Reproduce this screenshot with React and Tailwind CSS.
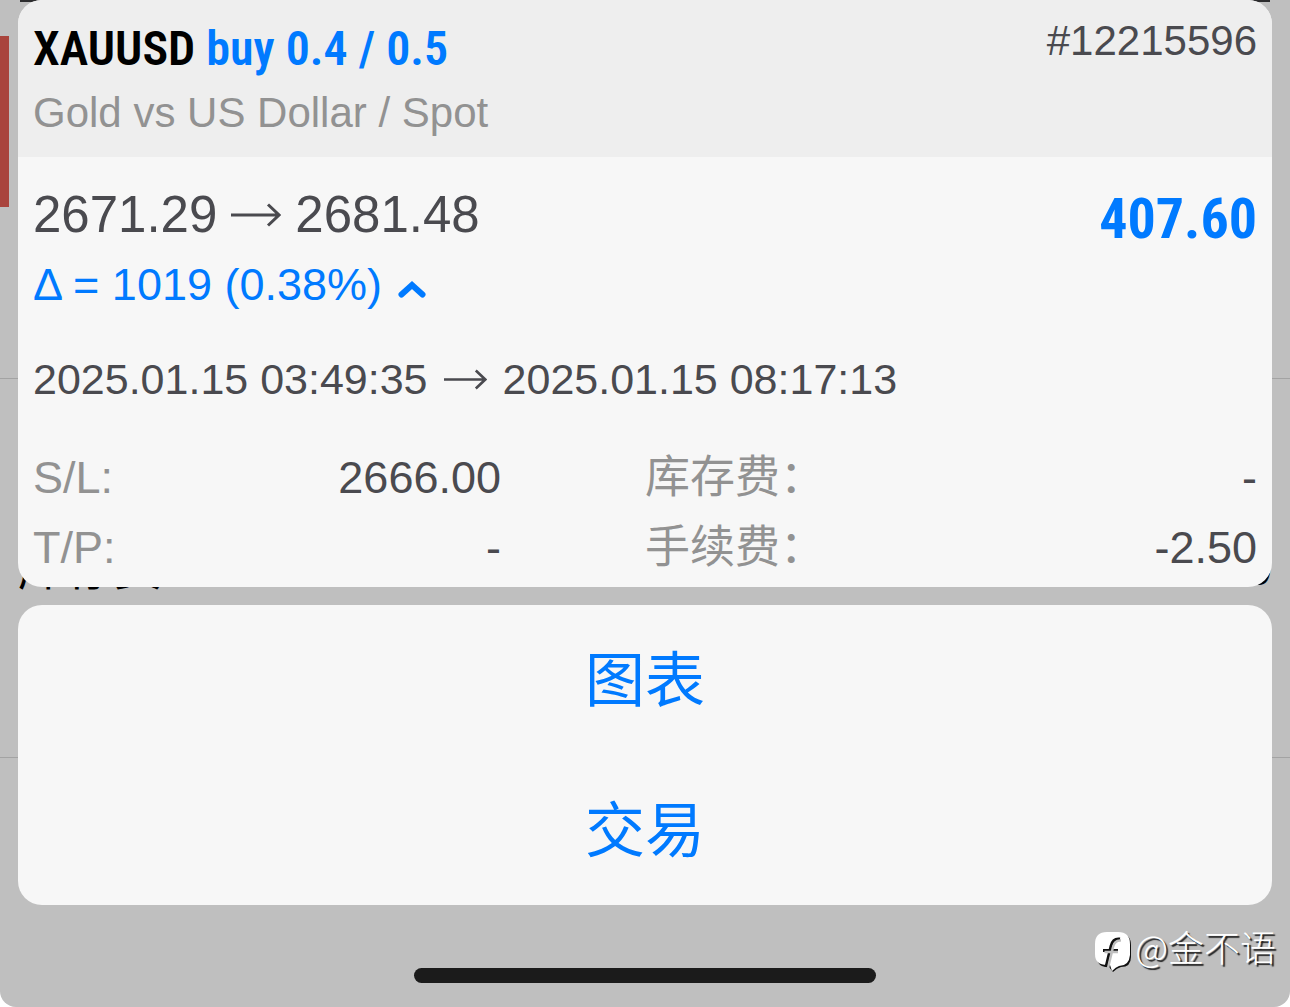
import clsx from 'clsx'

const ORDER = {
  symbol: 'XAUUSD',
  side: 'buy 0.4 / 0.5',
  description: 'Gold vs US Dollar / Spot',
  ticket: '#12215596',
  openPrice: '2671.29',
  closePrice: '2681.48',
  profit: '407.60',
  delta: 'Δ = 1019 (0.38%)',
  openTime: '2025.01.15 03:49:35',
  closeTime: '2025.01.15 08:17:13',
}

const DETAILS = [
  { label: 'S/L:', value: '2666.00' },
  { label: '库存费：', value: '-' },
  { label: 'T/P:', value: '-' },
  { label: '手续费：', value: '-2.50' },
]

const ACTIONS = ['图表', '交易']

const Arrow = ({ className }) => (
  <svg
    viewBox="0 0 50 24"
    className={clsx('flex-shrink-0', className)}
    fill="none"
    stroke="currentColor"
    strokeWidth="3"
    aria-hidden
  >
    <path d="M0 12H48M37 1.5L48 12L37 22.5" />
  </svg>
)

const Chevron = () => (
  <svg
    viewBox="0 0 28 20"
    className="w-7 h-5 mt-2 flex-shrink-0"
    fill="none"
    stroke="currentColor"
    strokeWidth="6"
    strokeLinecap="round"
    aria-hidden
  >
    <path d="M3.5 15.5L14 6L24.5 15.5" strokeLinejoin="miter" />
  </svg>
)

// the dimmed history list that shows around the sheet
const Backdrop = () => (
  <div className="absolute inset-0" aria-hidden>
    <div className="absolute left-0 top-9 w-[9px] h-[171px] bg-[#a9443d]" />
    <div className="absolute left-0 right-0 top-[378px] h-px bg-[#a3a3a3]" />
    <div className="absolute left-0 right-0 top-[757px] h-px bg-[#a3a3a3]" />
    <div className="absolute left-5 top-0 w-5 h-[2px] bg-[#2c2c2e]" />
    <div className="absolute right-5 top-0 w-5 h-[2px] bg-[#2c2c2e]" />
    <div className="absolute left-[18px] right-[18px] top-[539px] flex justify-between text-[48px] leading-[60px] text-black">
      <span>库存费</span>
      <span>0.00</span>
    </div>
  </div>
)

const OrderCard = () => (
  <section className="rounded-3xl overflow-hidden bg-[#f7f7f7] text-[#4a4a4f]">
    <header className="flex justify-between h-[157px] px-[15px] pt-5 bg-[#eeeeee]">
      <div>
        <h1 className="font-['Roboto_Condensed',sans-serif] font-semibold text-[48px] leading-[58px] text-black">
          {ORDER.symbol} <span className="text-[#007aff]">{ORDER.side}</span>
        </h1>
        <p className="mt-3 text-[42px] leading-[46px] text-[#929292]">{ORDER.description}</p>
      </div>
      <p className="text-[42px] leading-[42px]">{ORDER.ticket}</p>
    </header>

    <div className="px-[15px] pt-7 pb-1">
      <div className="flex justify-between">
        <p className="flex items-center gap-3.5 h-[60px] text-[51px] leading-[60px]">
          {ORDER.openPrice}
          <Arrow className="w-[50px] h-6" />
          {ORDER.closePrice}
        </p>
        <p className="pt-1 font-['Roboto_Condensed',sans-serif] font-bold text-[56px] leading-[60px] text-[#007aff]">
          {ORDER.profit}
        </p>
      </div>

      <button type="button" className="flex items-center gap-4 mt-2.5 text-[45px] leading-[52px] text-[#007aff]">
        {ORDER.delta}
        <Chevron />
      </button>

      <p className="flex items-center gap-4 mt-[42px] text-[43px] leading-[52px]">
        {ORDER.openTime}
        <Arrow className="w-[43px] h-[21px]" />
        {ORDER.closeTime}
      </p>

      <dl className="grid grid-cols-2 mt-[38px] text-[45px] leading-[70px]">
        {DETAILS.map(({ label, value }) => (
          <div key={label} className="flex justify-between odd:pr-36">
            <dt className="text-[#929292]">{label}</dt>
            <dd>{value}</dd>
          </div>
        ))}
      </dl>
    </div>
  </section>
)

const Actions = () => (
  <div className="flex flex-col rounded-3xl bg-[#f7f7f7]">
    {ACTIONS.map((label) => (
      <button key={label} type="button" className="h-[150px] pt-1 text-[60px] leading-[72px] text-[#007aff]">
        {label}
      </button>
    ))}
  </div>
)

const Watermark = () => (
  <div className="absolute right-[14px] top-[13px] flex items-end gap-0.5 text-[36px] leading-[56px] font-light text-white [text-shadow:2px_2px_1px_#222]">
    <svg viewBox="0 0 38 42" className="w-[38px] h-[42px]" fill="none" aria-hidden>
      <path
        d="M12 2H25Q36 2 36 13V25Q36 35 26 35Q22 36 18 40L14 35H12Q2 35 2 24V13Q2 2 12 2Z"
        fill="#111"
      />
      <path
        d="M12 0H23Q35 0 35 12V23Q34 34 24 34Q21 35 17 39L15 33H12Q0 33 0 22V12Q0 0 12 0Z"
        fill="#fff"
      />
      <path d="M25 7Q18 6 16 14L11 35M8 18.5H23" stroke="#111" strokeWidth="3" />
      <path d="M26 8.5Q19.5 8 18 15L13 36M9.5 20H23" stroke="#bfbfbf" strokeWidth="2.5" />
    </svg>
    <span className="font-['Noto_Sans_CJK_SC',sans-serif]">@金不语</span>
  </div>
)

const App = () => (
  <div className="bg-white">
    <main className="relative min-h-screen overflow-hidden rounded-b-2xl bg-[#bfbfbf] font-['Liberation_Sans','Noto_Sans_CJK_SC',sans-serif]">
      <Backdrop />
      <div className="relative flex flex-col gap-[18px] px-[18px]">
        <OrderCard />
        <Actions />
      </div>
      <footer className="relative pt-[63px] pb-6">
        <Watermark />
        <div className="mx-auto w-[462px] h-[15px] rounded-full bg-[#1b1b1b]" />
      </footer>
    </main>
  </div>
)

export default App
